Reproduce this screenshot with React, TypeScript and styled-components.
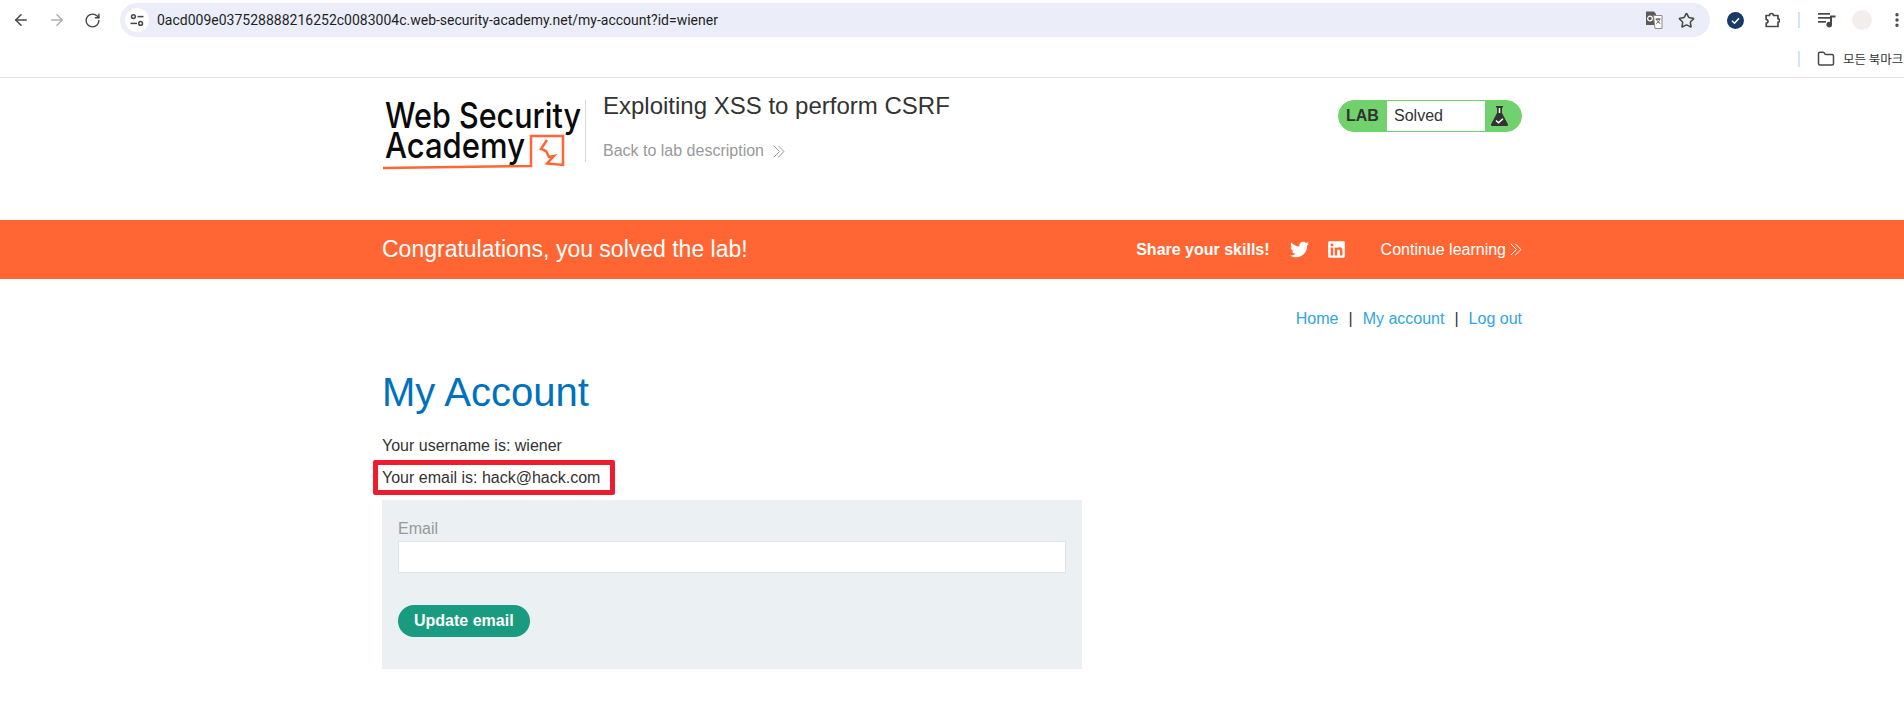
import styled, { createGlobalStyle } from 'styled-components';
import { ArrowLeft, ArrowRight, RotateCw, Star, Folder, EllipsisVertical } from 'lucide-react';
import { FaTwitter, FaLinkedin } from 'react-icons/fa';

const GlobalStyle = createGlobalStyle`
  html, body {
    margin: 0;
    padding: 0;
    height: 708px;
    overflow: hidden;
    background: #fff;
    font-family: "Liberation Sans", Arial, sans-serif;
    color: #333332;
    font-size: 16px;
  }
  * { box-sizing: border-box; }
`;

function ChevronsIcon({ color }: { color: string }) {
  return (
    <svg width="12" height="13" viewBox="0 0 12 13" fill="none" stroke={color} strokeWidth="1">
      <path d="M0.8 0.8 6.500 6.500 0.8 12.200" />
      <path d="M5.300 0.8 11 6.500 5.300 12.200" />
    </svg>
  );
}

function SiteChipIcon() {
  return (
    <svg width="14" height="14" viewBox="0 0 14 14" fill="none" stroke="#474747" strokeWidth="1.5">
      <circle cx="3.4" cy="3.6" r="1.9" />
      <path d="M7.5 3.6h6" />
      <circle cx="10.6" cy="10.4" r="1.9" />
      <path d="M0.5 10.4h6.5" />
    </svg>
  );
}

function TranslateIcon() {
  return (
    <svg width="18" height="18" viewBox="0 0 18 18">
      <path d="M1 0.500h8l2 2.500v11H1z" fill="#5a5a5a" />
      <path d="M8.500 4.500H17v13H10z" fill="#fff" stroke="#8a8a8a" strokeWidth="1" />
      <circle cx="5" cy="7.500" r="2.300" fill="none" stroke="#fff" strokeWidth="1.200" />
      <path d="M10.500 8h5M13 7v1.500M11.500 8c.5 2 2 3.500 3.800 4.500M14.800 8c-.5 2-1.800 3.500-3.500 4.500" fill="none" stroke="#555" strokeWidth="1" />
    </svg>
  );
}

function PuzzleIcon() {
  return (
    <svg width="18" height="18" viewBox="0 0 18 18" fill="none" stroke="#474747" strokeWidth="1.7" strokeLinejoin="round">
      <g transform="translate(2 0)">
        <path d="M2 4.500h3.500a2 2 0 0 1 4 0H14v3.300a1.700 1.700 0 0 1 0 3.400V15.500H2.200v-3.300a1.800 1.800 0 0 0 0-3.600z" />
      </g>
    </svg>
  );
}

function MediaIcon() {
  return (
    <svg width="18" height="16" viewBox="0 0 18 16" fill="#474747">
      <rect x="0" y="1" width="12" height="1.700" />
      <rect x="0" y="5" width="12" height="1.700" />
      <rect x="0" y="9" width="8" height="1.700" />
      <path d="M12 3.500h5.500v2H14v7a2.800 2.800 0 1 1-2-2.600z" />
    </svg>
  );
}

function CheckBadgeIcon() {
  return (
    <svg width="17" height="17" viewBox="0 0 17 17">
      <circle cx="8.500" cy="8.500" r="8.500" fill="#173a68" />
      <path d="M5 8.800 7.500 11.200 12 6.300" fill="none" stroke="#fff" strokeWidth="1.500" />
    </svg>
  );
}

function FlaskIcon() {
  return (
    <svg width="17" height="20" viewBox="0 0 17 20">
      <path d="M5 0h7v1.500h-1V7l5.800 11a1.200 1.200 0 0 1-1 2H1.200a1.200 1.200 0 0 1-1-2L6 7V1.500H5z" fill="#333332" />
      <path d="M7.700 2h1.600v5H7.700z" fill="#fff" />
      <path d="M5 14.500 7.500 16.800 12 12.800" fill="none" stroke="#fff" strokeWidth="1.500" />
    </svg>
  );
}

function AcademyLogo() {
  return (
    <svg width="200" height="70" viewBox="0 0 200 70">
      <text x="0" y="28" fontFamily="Inter, sans-serif" fontSize="35" fontWeight="500" textLength="196" lengthAdjust="spacingAndGlyphs" fill="#0a0a0a">Web Security</text>
      <text x="0" y="58" fontFamily="Inter, sans-serif" fontSize="35" fontWeight="500" textLength="140" lengthAdjust="spacingAndGlyphs" fill="#0a0a0a">Academy</text>
      <path d="M-2 68 146 66V36H178V65L162 63.500 169 56 164 57 161 51 156 49 162 40" fill="none" stroke="#ff6633" strokeWidth="2.500" />
    </svg>
  );
}

export default function App() {
  return (
    <>
      <GlobalStyle />
      <BrowserChrome>
        <Toolbar>
          <NavButton><ArrowLeft size={18} color="#474747" /></NavButton>
          <NavButton><ArrowRight size={18} color="#b0b0b0" /></NavButton>
          <NavButton><RotateCw size={17} color="#474747" /></NavButton>
          <AddressBar>
            <SiteChip><SiteChipIcon /></SiteChip>
            <UrlText>0acd009e037528888216252c0083004c.web-security-academy.net/my-account?id=wiener</UrlText>
            <AddressIcons>
              <TranslateIcon />
              <Star size={17} color="#474747" strokeWidth={2.200} />
            </AddressIcons>
          </AddressBar>
          <ExtensionIcons>
            <CheckBadgeIcon />
            <PuzzleIcon />
            <ChromeDivider />
            <MediaIcon />
            <Avatar />
            <EllipsisVertical size={18} color="#474747" strokeWidth={2.500} />
          </ExtensionIcons>
        </Toolbar>
        <BookmarksBar>
          <ChromeDivider />
          <Folder size={18} color="#474747" />
          <BookmarkText>모든 북마크</BookmarkText>
        </BookmarksBar>
      </BrowserChrome>

      <LabHeader>
        <Container>
          <HeaderRow>
            <LogoBox>
              <AcademyLogo />
            </LogoBox>
            <LabTitleBox>
              <LabTitle>Exploiting XSS to perform CSRF</LabTitle>
              <BackLink>
                Back to lab description
                <ChevronsIcon color="#999" />
              </BackLink>
            </LabTitleBox>
            <LabBadge>
              <LabLabel>LAB</LabLabel>
              <LabStatus>Solved</LabStatus>
              <FlaskBox><FlaskIcon /></FlaskBox>
            </LabBadge>
          </HeaderRow>
        </Container>
      </LabHeader>

      <Banner>
        <BannerRow>
          <BannerTitle>Congratulations, you solved the lab!</BannerTitle>
          <ShareText>Share your skills!</ShareText>
          <SocialIcons>
            <FaTwitter size={19} />
            <FaLinkedin size={19} />
          </SocialIcons>
          <ContinueLink>
            Continue learning
            <ChevronsIcon color="#fff" />
          </ContinueLink>
        </BannerRow>
      </Banner>

      <Container>
        <TopLinks>
          <TopLink>Home</TopLink>
          <Pipe>|</Pipe>
          <TopLink>My account</TopLink>
          <Pipe>|</Pipe>
          <TopLink>Log out</TopLink>
        </TopLinks>
        <Heading>My Account</Heading>
        <InfoLine>Your username is: wiener</InfoLine>
        <EmailLine>
          Your email is: hack@hack.com
          <Highlight />
        </EmailLine>
        <EmailForm>
          <FieldLabel>Email</FieldLabel>
          <EmailInput />
          <SubmitButton type="button">Update email</SubmitButton>
        </EmailForm>
      </Container>
    </>
  );
}

const BrowserChrome = styled.div`
  height: 78px;
  background: #fff;
  border-bottom: 1px solid #e3e3e3;
`;

const Toolbar = styled.div`
  display: flex;
  align-items: center;
  height: 40px;
  padding: 3px 0 3px 12px;
`;

const NavButton = styled.div`
  width: 36px;
  display: flex;
  align-items: center;
  flex-shrink: 0;
`;

const AddressBar = styled.div`
  display: flex;
  align-items: center;
  width: 1590px;
  height: 34px;
  flex-shrink: 0;
  padding: 0 15px 0 5px;
  background: #ebeef8;
  border-radius: 17px;
`;

const SiteChip = styled.div`
  width: 24px;
  height: 24px;
  border-radius: 50%;
  background: #fff;
  display: flex;
  align-items: center;
  justify-content: center;
  flex-shrink: 0;
`;

const UrlText = styled.div`
  margin-left: 8px;
  font-family: Roboto, sans-serif;
  font-size: 14px;
  color: #1f1f1f;
  white-space: nowrap;
  flex: 1;
`;

const AddressIcons = styled.div`
  display: flex;
  align-items: center;
  gap: 15px;
`;

const ExtensionIcons = styled.div`
  display: flex;
  align-items: center;
  gap: 18px;
  margin-left: 17px;
`;

const ChromeDivider = styled.div`
  width: 2px;
  height: 16px;
  background: #d3e3fd;
  flex-shrink: 0;
`;

const Avatar = styled.div`
  width: 20px;
  height: 20px;
  margin: 0 -2px;
  border-radius: 50%;
  background: #f3eeeb;
`;

const BookmarksBar = styled.div`
  display: flex;
  align-items: center;
  justify-content: flex-start;
  height: 37px;
  padding-left: 1798px;
  gap: 17px;
  white-space: nowrap;
  overflow: hidden;
`;

const BookmarkText = styled.span`
  margin-left: -9px;
  font-family: "Noto Sans CJK KR", sans-serif;
  font-size: 12.500px;
  color: #333;
`;

const LabHeader = styled.header`
  height: 142px;
  background: #fff;
`;

const Container = styled.div`
  width: 1140px;
  margin: 0 auto;
`;

const HeaderRow = styled.div`
  display: flex;
  align-items: flex-start;
  padding-top: 22px;
`;

const LogoBox = styled.div`
  width: 201px;
  height: 62px;
  margin-left: 3px;
  border-right: 1px solid #d8d8d8;
  flex-shrink: 0;

  svg {
    display: block;
    overflow: visible;
  }
`;

const LabTitleBox = styled.div`
  flex: 1;
  margin-left: 17px;
`;

const LabTitle = styled.h2`
  margin: -9px 0 0;
  font-size: 24px;
  font-weight: 400;
  line-height: 30px;
  color: #333332;
`;

const BackLink = styled.div`
  display: flex;
  align-items: center;
  gap: 9px;
  margin-top: 20px;
  color: #999;
  font-size: 16px;
  line-height: 20px;
`;

const LabBadge = styled.div`
  display: flex;
  align-items: stretch;
  width: 184px;
  height: 32px;
  border: 1px solid #70d16d;
  border-radius: 16px;
  background: #70d16d;
  overflow: hidden;
`;

const LabLabel = styled.div`
  width: 48px;
  padding-left: 7px;
  font-weight: 700;
  line-height: 30px;
  color: #333332;
`;

const LabStatus = styled.div`
  width: 98px;
  padding-left: 7px;
  background: #fff;
  line-height: 30px;
`;

const FlaskBox = styled.div`
  flex: 1;
  display: flex;
  align-items: center;
  justify-content: center;
  padding-right: 8px;
`;

const Banner = styled.div`
  height: 59px;
  background: #ff6633;
  color: #fff;
`;

const BannerRow = styled.div`
  display: flex;
  align-items: center;
  width: 1140px;
  height: 100%;
  margin: 0 auto;
`;

const BannerTitle = styled.h4`
  flex: 1;
  margin: 0;
  font-size: 23px;
  font-weight: 400;
`;

const ShareText = styled.span`
  font-weight: 700;
  font-size: 16px;
`;

const SocialIcons = styled.div`
  display: flex;
  align-items: center;
  gap: 18px;
  margin-left: 20px;
`;

const ContinueLink = styled.div`
  display: flex;
  align-items: center;
  gap: 4px;
  margin-left: 35px;
  font-size: 16px;
`;

const TopLinks = styled.div`
  display: flex;
  justify-content: flex-end;
  align-items: center;
  gap: 10px;
  padding-top: 31px;
  line-height: 18px;
`;

const TopLink = styled.a`
  color: #2fa5e6;
  cursor: pointer;
`;

const Pipe = styled.span`
  color: #333332;
`;

const Heading = styled.h1`
  margin: 40px 0 0;
  font-size: 40px;
  font-weight: 400;
  line-height: 48px;
  color: #0071bc;
`;

const InfoLine = styled.p`
  margin: 21px 0 0;
  line-height: 18px;
`;

const EmailLine = styled.p`
  position: relative;
  margin: 14px 0 0;
  line-height: 18px;
`;

const Highlight = styled.span`
  position: absolute;
  left: -9px;
  top: -9px;
  width: 242px;
  height: 35px;
  border: 5px solid #ee1c2e;
  border-radius: 2px;
`;

const EmailForm = styled.form`
  display: flex;
  flex-direction: column;
  align-items: flex-start;
  width: 700px;
  height: 169px;
  margin-top: 13px;
  padding: 20px 16px 0;
  background: #ebf0f2;
`;

const FieldLabel = styled.label`
  color: #999;
  line-height: 18px;
`;

const EmailInput = styled.input`
  width: 668px;
  height: 32px;
  margin-top: 3px;
  background: #fff;
  border: 1px solid #dfe3e5;
  outline: none;
`;

const SubmitButton = styled.button`
  height: 32px;
  margin-top: 32px;
  padding: 0 16px;
  border: 0;
  border-radius: 16px;
  background: #189b7e;
  color: #fff;
  font-family: inherit;
  font-size: 16px;
  font-weight: 700;
`;
